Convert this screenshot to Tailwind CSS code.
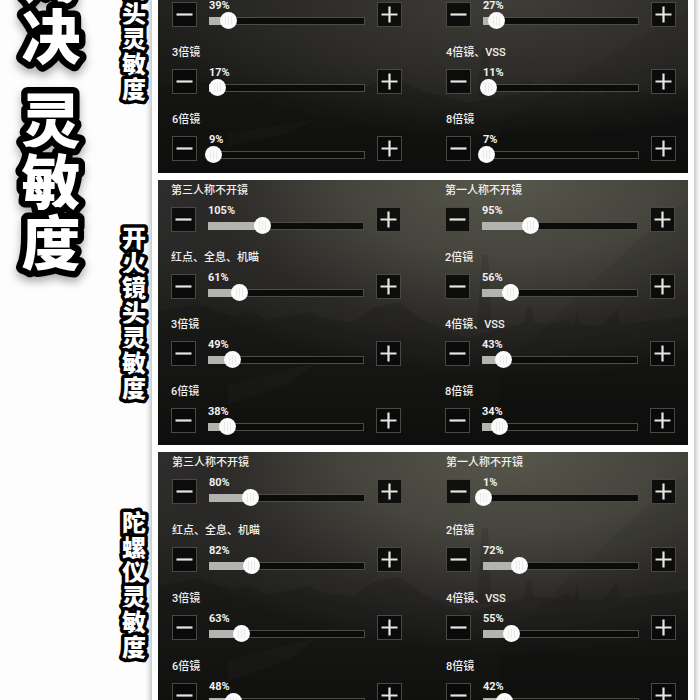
<!DOCTYPE html>
<html lang="zh-CN">
<head>
<meta charset="utf-8">
<meta name="viewport" content="width=device-width, initial-scale=1">
<title>灵敏度</title>
<script src="https://cdn.jsdelivr.net/npm/@tailwindcss/browser@4"></script>
</head>
<body class="h-screen overflow-hidden bg-[#fdfdfd] font-[Roboto,'Noto_Sans_CJK_SC',sans-serif] text-[#f0f0ee]">
<div class="flex h-full items-start">
  <aside class="w-[152px] shrink-0">
    <svg class="block h-[700px] w-full font-['Noto_Sans_CJK_SC',sans-serif] font-black [paint-order:stroke]" viewBox="0 0 152 700" fill="#fff" stroke="#000" stroke-linejoin="round" text-anchor="middle">
      <text class="text-[59px] drop-shadow-[0_5px_4px_rgba(0,0,0,0.3)]" stroke-width="13" x="51 51 51 51 51" y="-2 59 143 204 265">对决灵敏度</text>
      <g class="text-[24px]" stroke-width="7">
        <text x="134 134 134 134 134" y="-2 23 48 73 98">镜头灵敏度</text>
        <text x="134 134 134 134 134 134 134" y="247 272 297 322 347 372 397">开火镜头灵敏度</text>
        <text x="134 134 134 134 134 134" y="532 557 581 606 631 656">陀螺仪灵敏度</text>
      </g>
    </svg>
  </aside>
  <main id="panels" class="-mt-px mr-1.5 flex min-w-0 flex-1 flex-col gap-[7px] bg-white px-1.5 shadow-[0_0_5px_2px_rgba(0,0,0,0.25)]"></main>
</div>
<script>
const MAX = 300;
const panels = [
  { name: '镜头灵敏度', pad: 'pl-3.5 pr-3 h-[174px]', gap: 'pb-4', rows: [
    [['', 39], ['', 27]], [['3倍镜', 17], ['4倍镜、VSS', 11]], [['6倍镜', 9], ['8倍镜', 7]] ] },
  { name: '开火镜头灵敏度', pad: 'px-[13px] pt-[3px] h-[265px]', gap: 'pb-4', rows: [
    [['第三人称不开镜', 105], ['第一人称不开镜', 95]], [['红点、全息、机瞄', 61], ['2倍镜', 56]],
    [['3倍镜', 49], ['4倍镜、VSS', 43]], [['6倍镜', 38], ['8倍镜', 34]] ] },
  { name: '陀螺仪灵敏度', pad: 'pl-3.5 pr-3 pt-[3px] h-[270px]', gap: 'pb-[17px]', rows: [
    [['第三人称不开镜', 80], ['第一人称不开镜', 1]], [['红点、全息、机瞄', 82], ['2倍镜', 72]],
    [['3倍镜', 63], ['4倍镜、VSS', 55]], [['6倍镜', 48], ['8倍镜', 42]] ] },
];
const btn = 'mt-[3px] grid size-[25px] shrink-0 place-items-center border border-[#484845] bg-[#090909]/90';
const icon = d => `<svg class="size-[17px]" viewBox="0 0 17 17" fill="none" stroke="#e6e6e1" stroke-width="2.2" aria-hidden="true"><path d="${d}"/></svg>`;
const cell = ([label, v], id, gap) => `
  <div class="${gap}">
    ${label ? `<label for="${id}" class="mb-[5px] block text-[11px] leading-4 font-medium whitespace-nowrap">${label}</label>` : ''}
    <div class="flex gap-3">
      <button type="button" aria-label="-" class="${btn}">${icon('M.5 8.5h16')}</button>
      <div class="min-w-0 flex-1">
        <output for="${id}" class="block h-[13px] text-[11px] leading-[14px] font-bold">${v}%</output>
        <div class="relative flex h-[17px] items-center">
          <div class="flex h-2 w-full bg-[#0b0b0a] inset-ring inset-ring-[#4b4b48]"><div class="bg-[#b3b3b0]" style="width:${v / MAX * 100}%"></div></div>
          <input id="${id}" type="range" min="0" max="${MAX}" value="${v}" aria-valuetext="${v}%" class="absolute -left-[9px] h-[17px] w-[calc(100%+17px)] appearance-none bg-transparent [&::-webkit-slider-thumb]:size-[17px] [&::-webkit-slider-thumb]:appearance-none [&::-webkit-slider-thumb]:rounded-full [&::-webkit-slider-thumb]:bg-[#fbfbfb] [&::-webkit-slider-thumb]:bg-[linear-gradient(90deg,transparent_5px,#e9e9e9_5px_6px,transparent_6px_8px,#e9e9e9_8px_9px,transparent_9px_11px,#e9e9e9_11px_12px,transparent_12px)] [&::-webkit-slider-thumb]:bg-size-[17px_9px] [&::-webkit-slider-thumb]:bg-center [&::-webkit-slider-thumb]:bg-no-repeat">
        </div>
      </div>
      <button type="button" aria-label="+" class="${btn}">${icon('M.5 8.5h16M8.5.5v16')}</button>
    </div>
  </div>`;
const hills = `<svg class="absolute inset-0 -z-10 size-full" viewBox="0 0 530 265" preserveAspectRatio="none" aria-hidden="true">
  <path d="M340 190 480 60 530 20V265H340Z" fill="#000" opacity=".05"/>
  <path d="M0 132 40 124 75 136 90 130 110 140 150 132 165 138 195 142 215 128 240 122 265 140 310 158V265H0Z" fill="#000" opacity=".12"/>
  <path d="M310 158 330 152 360 145 367 142 369 126 373 126 376 142 395 144 410 139 416 144 419 130 422 145 445 145 459 128 462 144 530 136V265H310Z" fill="#000" opacity=".12"/>
  <path d="M70 205 160 182 130 204 70 225Z" fill="#fff" opacity=".02"/>
  <path d="M324 75h6l4 74h-15Z" fill="#000" opacity=".1"/></svg>`;
document.getElementById('panels').innerHTML = panels.map((p, i) => `
  <section aria-label="${p.name}" class="relative isolate overflow-hidden ${p.pad} ${i
    ? 'bg-[radial-gradient(ellipse_75%_75%_at_66%_0%,#57574c_0%,#45443d_40%,#2a2927_75%,transparent_100%),linear-gradient(#333331,#1c1c1b_55%,#111110)]'
    : 'bg-[radial-gradient(ellipse_70%_80%_at_66%_0%,#3f3d38_0%,#2d2c29_55%,transparent_100%),linear-gradient(#20201f,#171716_55%,#111110)]'}">
    ${hills}
    <div class="grid grid-cols-2 gap-x-11">${p.rows.flatMap((r, j) => r.map((c, k) => cell(c, `s${i}${j}${k}`, p.gap))).join('')}</div>
  </section>`).join('');
</script>
</body>
</html>
